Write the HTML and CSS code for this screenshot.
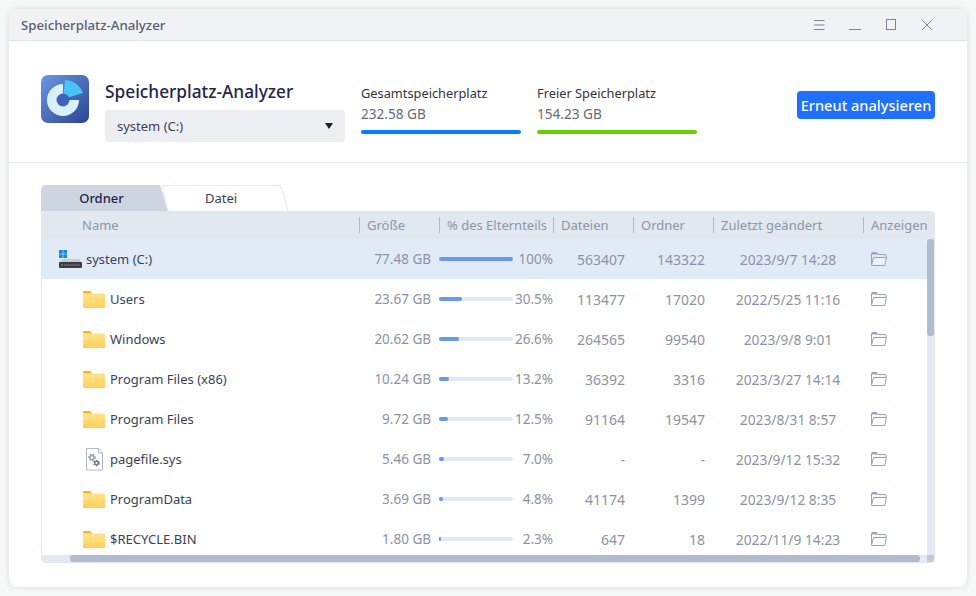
FILE: index.html
```html
<!DOCTYPE html>
<html lang="de">
<head>
    <meta charset="UTF-8">
    <meta name="viewport" content="width=device-width, initial-scale=1.0">
    <title>Speicherplatz-Analyzer</title>
    <link rel="stylesheet" href="styles.css">
</head>
<body>
    <svg class="icon-defs" width="0" height="0">
        <defs>
            <linearGradient id="folderFill" x1="0" y1="0" x2="0" y2="1">
                <stop offset="0" stop-color="#ffe391"/>
                <stop offset="1" stop-color="#fdcf5a"/>
            </linearGradient>
            <linearGradient id="logoFill" x1="0" y1="0" x2="1" y2="1">
                <stop offset="0" stop-color="#6b97e6"/>
                <stop offset="1" stop-color="#2c4390"/>
            </linearGradient>
            <symbol id="folder" viewBox="0 0 22 17">
                <path d="M0 1.2C0 .5.5 0 1.2 0h6l2 2.5H0z" fill="#fbb417"/>
                <path d="M0 2.5h20.8c.7 0 1.2.5 1.2 1.2v12c0 .7-.5 1.3-1.2 1.3H1.2C.5 17 0 16.400 0 15.700z" fill="url(#folderFill)"/>
            </symbol>
            <symbol id="open" viewBox="0 0 16 14">
                <path d="M.5 12.500V1.500c0-.5.300-1 1-1h4l1.500 2h7c.6 0 1 .4 1 1v1.500" fill="none" stroke="#9aa3b5"/>
                <path d="M.5 1.500c0-.5.300-1 1-1h4l1.500 2H.5z" fill="#9aa3b5"/>
                <path d="M.5 13.500h13.200l1.800-8H2.500L.5 13.500z" fill="#fff" fill-opacity=".3" stroke="#9aa3b5"/>
            </symbol>
        </defs>
    </svg>

    <div class="window">
        <div class="titlebar">
            <span class="titlebar-name">Speicherplatz-Analyzer</span>
            <div class="window-buttons">
                <svg width="12" height="12" viewBox="0 0 12 12"><path d="M1 1.500h10.500M1 6h10.500M1 10.500h10.500" stroke="#7d8594" fill="none"/></svg>
                <svg width="12" height="12" viewBox="0 0 12 12"><path d="M0 10.500h12" stroke="#7d8594" fill="none"/></svg>
                <svg width="12" height="12" viewBox="0 0 12 12"><rect x="1.500" y=".5" width="9" height="10" stroke="#7d8594" fill="none"/></svg>
                <svg width="12" height="12" viewBox="0 0 12 12"><path d="M.5 .5l10.500 10.500M11.500 .5L1 11" stroke="#7d8594" fill="none"/></svg>
            </div>
        </div>

        <div class="summary">
            <svg class="logo" width="48" height="48" viewBox="0 0 48 48">
                <rect width="48" height="48" rx="7" fill="url(#logoFill)"/>
                <path d="M22 9A16 16 0 1 0 38 25L22 25z" fill="#d8f0fa"/>
                <path d="M24 5A20 20 0 0 1 42 18L22 25z" fill="#49c3f7"/>
                <circle cx="22" cy="25" r="6.500" fill="#3f63b8"/>
                <path d="M22 25L40 20" stroke="#3f63b8" stroke-width="2"/>
            </svg>
            <div class="drive-box">
                <div class="app-name">Speicherplatz-Analyzer</div>
                <div class="drive-select">
                    <span>system (C:)</span>
                    <i class="caret"></i>
                </div>
            </div>
            <div class="stat">
                <div class="stat-label">Gesamtspeicherplatz</div>
                <div class="stat-value">232.58 GB</div>
                <div class="stat-bar stat-blue"></div>
            </div>
            <div class="stat">
                <div class="stat-label">Freier Speicherplatz</div>
                <div class="stat-value">154.23 GB</div>
                <div class="stat-bar stat-green"></div>
            </div>
            <button class="scan-button">Erneut analysieren</button>
        </div>

        <div class="content">
            <div class="tabs">
                <div class="tab tab-folder">Ordner</div>
                <div class="tab tab-file">
                    <svg class="tab-outline" width="126" height="26" viewBox="0 0 126 26">
                        <path d="M6 26L.5 3.500Q0 .5 3 .5H116Q118.500 .5 119.500 3L126 26" fill="#fff" stroke="#e3e8ef"/>
                    </svg>
                    <span class="tab-text">Datei</span>
                </div>
            </div>
            <div class="table">
                <div class="row head">
                    <div class="head-name">Name</div>
                    <div>Größe</div>
                    <div>% des Elternteils</div>
                    <div>Dateien</div>
                    <div>Ordner</div>
                    <div>Zuletzt geändert</div>
                    <div>Anzeigen</div>
                </div>

                <div class="row selected">
                    <div class="name name-root">
                        <svg width="23" height="18" viewBox="0 0 23 18">
                            <path d="M0 0h3.700v3.700H0zM4.300 0H8v3.700H4.300zM0 4.300h3.700V8H0zM4.300 4.300H8V8H4.300z" fill="#1b86e0"/>
                            <path d="M3 9h17l3 4H0z" fill="#c9ccd2"/>
                            <rect y="12" width="23" height="6" rx="1" fill="#3a3d44"/>
                            <rect x="5" y="14.500" width="16" height="1" fill="#74777e"/>
                            <rect x="2" y="14.500" width="2" height="1" fill="#3fd45a"/>
                        </svg>
                        <span>system (C:)</span>
                    </div>
                    <div class="size">77.48 GB</div>
                    <div class="share"><span class="track"><span class="fill" style="width: 100%"></span></span><span class="pct">100%</span></div>
                    <div class="num">563407</div>
                    <div class="num">143322</div>
                    <div class="date">2023/9/7 14:28</div>
                    <div><svg class="open" width="16" height="14"><use href="#open"/></svg></div>
                </div>

                <div class="row">
                    <div class="name"><svg width="22" height="17"><use href="#folder"/></svg><span>Users</span></div>
                    <div class="size">23.67 GB</div>
                    <div class="share"><span class="track"><span class="fill" style="width: 30.5%"></span></span><span class="pct">30.5%</span></div>
                    <div class="num">113477</div>
                    <div class="num">17020</div>
                    <div class="date">2022/5/25 11:16</div>
                    <div><svg class="open" width="16" height="14"><use href="#open"/></svg></div>
                </div>

                <div class="row">
                    <div class="name"><svg width="22" height="17"><use href="#folder"/></svg><span>Windows</span></div>
                    <div class="size">20.62 GB</div>
                    <div class="share"><span class="track"><span class="fill" style="width: 26.6%"></span></span><span class="pct">26.6%</span></div>
                    <div class="num">264565</div>
                    <div class="num">99540</div>
                    <div class="date">2023/9/8 9:01</div>
                    <div><svg class="open" width="16" height="14"><use href="#open"/></svg></div>
                </div>

                <div class="row">
                    <div class="name"><svg width="22" height="17"><use href="#folder"/></svg><span>Program Files (x86)</span></div>
                    <div class="size">10.24 GB</div>
                    <div class="share"><span class="track"><span class="fill" style="width: 13.2%"></span></span><span class="pct">13.2%</span></div>
                    <div class="num">36392</div>
                    <div class="num">3316</div>
                    <div class="date">2023/3/27 14:14</div>
                    <div><svg class="open" width="16" height="14"><use href="#open"/></svg></div>
                </div>

                <div class="row">
                    <div class="name"><svg width="22" height="17"><use href="#folder"/></svg><span>Program Files</span></div>
                    <div class="size">9.72 GB</div>
                    <div class="share"><span class="track"><span class="fill" style="width: 12.5%"></span></span><span class="pct">12.5%</span></div>
                    <div class="num">91164</div>
                    <div class="num">19547</div>
                    <div class="date">2023/8/31 8:57</div>
                    <div><svg class="open" width="16" height="14"><use href="#open"/></svg></div>
                </div>

                <div class="row">
                    <div class="name">
                        <svg width="22" height="23" viewBox="0 0 22 23">
                            <path d="M3.500.5h12l4 4.500v17h-16z" fill="#fff" stroke="#b4b8bf"/>
                            <path d="M15.500.5v4.500h4" fill="#eef0f3" stroke="#b4b8bf"/>
                            <circle cx="9" cy="9.500" r="2.500" fill="none" stroke="#9aa0aa" stroke-width="2.600" stroke-dasharray="1.400 1"/>
                            <circle cx="9" cy="9.500" r="2.200" fill="none" stroke="#9aa0aa" stroke-width="1.200"/>
                            <circle cx="13.500" cy="15" r="2.100" fill="none" stroke="#757b86" stroke-width="2.400" stroke-dasharray="1.200 .9"/>
                            <circle cx="13.500" cy="15" r="1.900" fill="none" stroke="#757b86" stroke-width="1.100"/>
                        </svg>
                        <span>pagefile.sys</span>
                    </div>
                    <div class="size">5.46 GB</div>
                    <div class="share"><span class="track"><span class="fill" style="width: 7%"></span></span><span class="pct">7.0%</span></div>
                    <div class="num">-</div>
                    <div class="num">-</div>
                    <div class="date">2023/9/12 15:32</div>
                    <div><svg class="open" width="16" height="14"><use href="#open"/></svg></div>
                </div>

                <div class="row">
                    <div class="name"><svg width="22" height="17"><use href="#folder"/></svg><span>ProgramData</span></div>
                    <div class="size">3.69 GB</div>
                    <div class="share"><span class="track"><span class="fill" style="width: 4.8%"></span></span><span class="pct">4.8%</span></div>
                    <div class="num">41174</div>
                    <div class="num">1399</div>
                    <div class="date">2023/9/12 8:35</div>
                    <div><svg class="open" width="16" height="14"><use href="#open"/></svg></div>
                </div>

                <div class="row">
                    <div class="name"><svg width="22" height="17"><use href="#folder"/></svg><span>$RECYCLE.BIN</span></div>
                    <div class="size">1.80 GB</div>
                    <div class="share"><span class="track"><span class="fill" style="width: 2.3%"></span></span><span class="pct">2.3%</span></div>
                    <div class="num">647</div>
                    <div class="num">18</div>
                    <div class="date">2022/11/9 14:23</div>
                    <div><svg class="open" width="16" height="14"><use href="#open"/></svg></div>
                </div>

                <!-- fake scrollbars, they sit over the rows -->
                <div class="scroll-y"><div class="thumb-y"></div></div>
                <div class="scroll-x"><div class="thumb-x"></div></div>
                <div class="scroll-corner"></div>
            </div>
        </div>
    </div>
</body>
</html>
```

FILE: styles.css
```css
* {
    margin: 0;
    padding: 0;
    box-sizing: border-box;
}

body {
    height: 596px;
    overflow: hidden;
    background-color: #f7f8f8;
    font-family: "Noto Sans", Arial, sans-serif;
    color: #3a4256;
    padding: 9px;
}

.icon-defs {
    position: absolute;
}

.window {
    width: 958px;
    height: 578px;
    background-color: #ffffff;
    border-radius: 8px;
    overflow: hidden;
    box-shadow: 0 0 6px rgba(0, 0, 0, 0.12);
}

.titlebar {
    height: 32px;
    display: flex;
    justify-content: space-between;
    align-items: center;
    padding: 0 34px 0 12px;
    background-color: #f0f2f6;
    border-bottom: 1px solid #dfe5ec;
}

.titlebar-name {
    font-size: 13.25px;
    font-weight: 500;
    color: #5a5f6e;
}

.window-buttons {
    display: flex;
    gap: 24px;
}

.summary {
    height: 122px;
    display: flex;
    align-items: flex-start;
    padding: 34px 32px 0;
    border-bottom: 1px solid #e3e8ee;
}

.logo {
    flex: none;
}

.drive-box {
    width: 240px;
    margin-left: 16px;
    margin-top: 1px;
}

.app-name {
    font-size: 17.3px;
    font-weight: 500;
    line-height: 31px;
    color: #20264a;
}

.drive-select {
    height: 32px;
    margin-top: 3px;
    display: flex;
    justify-content: space-between;
    align-items: center;
    padding: 0 12px;
    background-color: #eceef2;
    border-radius: 4px;
    font-size: 13px;
    color: #3a4256;
}

.caret {
    width: 0;
    height: 0;
    border-left: 4px solid transparent;
    border-right: 4px solid transparent;
    border-top: 6px solid #1d2029;
}

.stat {
    width: 160px;
    margin-left: 16px;
    margin-top: 8px;
}

.stat-label {
    font-size: 12.8px;
    line-height: 20px;
    color: #33343a;
}

.stat-value {
    font-size: 13.6px;
    line-height: 22px;
    color: #666a74;
}

.stat-bar {
    height: 4px;
    margin-top: 5px;
    border-radius: 2px;
}

.stat-blue {
    background-color: #0a7cff;
}

.stat-green {
    background-color: #66cf00;
}

.stat + .stat {
    margin-right: 100px;
}

.scan-button {
    width: 138px;
    height: 28px;
    margin-top: 16px;
    border: none;
    border-radius: 4px;
    background-color: #2070ff;
    color: #ffffff;
    font-family: inherit;
    font-size: 14.6px;
    font-weight: 500;
}

.content {
    padding: 22px 32px 0;
}

.tabs {
    display: flex;
    height: 26px;
}

.tab {
    font-size: 13px;
    line-height: 26px;
    text-align: center;
    color: #3a3f50;
}

.tab-folder {
    width: 127px;
    padding-right: 6px;
    background-color: #cdd6e0;
    border-radius: 5px 0 0 0;
    clip-path: polygon(0 0, 119px 0, 127px 100%, 0 100%);
    font-weight: 500;
    color: #20264a;
}

.tab-file {
    position: relative;
    width: 126px;
    margin-left: -6px;
    padding-right: 8px;
}

.tab-outline {
    position: absolute;
    top: 0;
    left: 0;
}

.tab-text {
    position: relative;
}

.table {
    position: relative;
    height: 352px;
    overflow: hidden;
    border: 1px solid #e3e8ef;
    border-top: none;
    border-radius: 0 4px 4px 4px;
}

.row {
    display: grid;
    grid-template-columns: 317px 80px 114px 80px 80px 150px 72px;
    height: 40px;
    align-items: center;
    font-size: 14px;
    color: #8b93a3;
}

.head {
    height: 28px;
    background-color: #e2e8f0;
    font-size: 13px;
    color: #8d95a6;
}

.head > div {
    height: 16px;
    line-height: 16px;
    padding-left: 7px;
    border-left: 1px solid #b3bac6;
}

.head > .head-name {
    padding-left: 40px;
    border-left: none;
}

.selected {
    background-color: #e1ebf8;
}

.name {
    display: flex;
    align-items: center;
    gap: 5px;
    padding-left: 41px;
    font-size: 13px;
    color: #3a4256;
}

.name-root {
    gap: 4px;
    padding-left: 17px;
}

.size {
    padding-right: 8px;
    font-size: 13.5px;
    text-align: right;
}

.share {
    display: flex;
    align-items: center;
}

.track {
    width: 74px;
    height: 4px;
    flex: none;
    background-color: #e2e8f4;
    border-radius: 2px;
}

.fill {
    display: block;
    height: 4px;
    background-color: #6a97e8;
    border-radius: 2px;
}

.pct {
    flex: 1;
    font-size: 13.5px;
    text-align: right;
}

.num {
    padding-right: 8px;
    text-align: right;
}

.date {
    font-size: 13.8px;
    text-align: center;
}

.open {
    display: block;
    margin-left: 8px;
}

.scroll-y {
    position: absolute;
    top: 28px;
    right: 0;
    bottom: 7px;
    width: 7px;
    background-color: #e4e9f4;
}

.thumb-y {
    height: 97px;
    background-color: #aebccd;
    border-radius: 3px;
}

.scroll-x {
    position: absolute;
    left: 0;
    right: 7px;
    bottom: 0;
    height: 7px;
    background-color: #e4e9f4;
}

.thumb-x {
    height: 7px;
    margin-left: 28px;
    width: 850px;
    background-color: #aebccd;
    border-radius: 3px;
}

.scroll-corner {
    position: absolute;
    right: 0;
    bottom: 0;
    width: 7px;
    height: 7px;
    background-color: #c3cad5;
}
```
